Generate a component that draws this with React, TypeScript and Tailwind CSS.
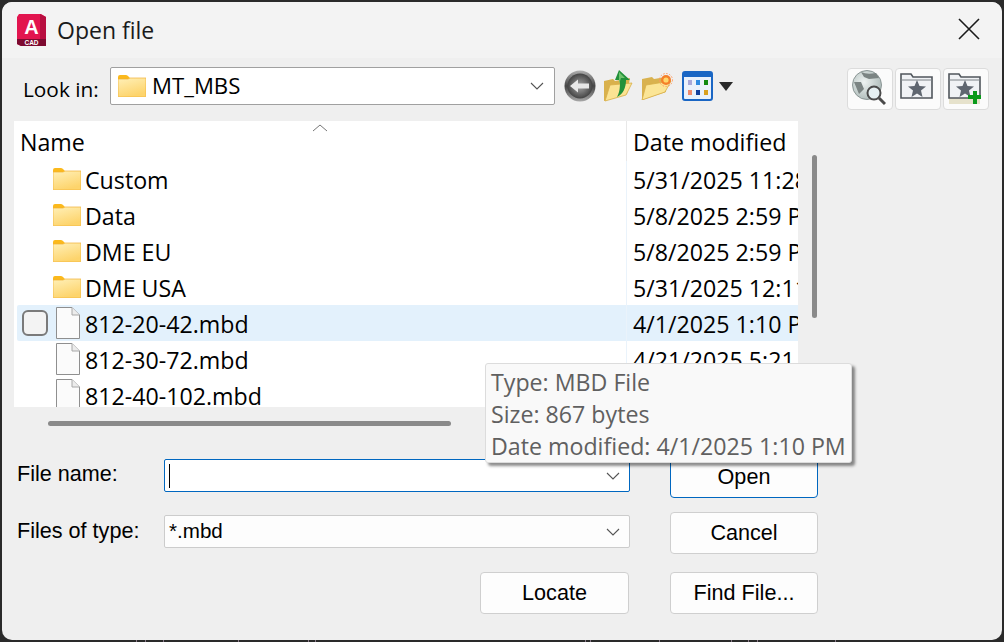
import React from "react";

const uiFont = "font-['Open_Sans','Noto_Sans',sans-serif]";
const formFont = "font-['Liberation_Sans',Arial,sans-serif]";

const FolderIcon: React.FC<{ id: string }> = ({ id }) => (
  <svg width="28" height="22" viewBox="0 0 28 22" className="shrink-0">
    <defs>
      <linearGradient id={id} x1="0" y1="0" x2="0.4" y2="1">
        <stop offset="0" stopColor="#fff0b8" />
        <stop offset="1" stopColor="#fdd46c" />
      </linearGradient>
    </defs>
    <path d="M0 2 Q0 0 2 0 H8 Q9.5 0 10.5 1.5 L12 3 H28 V6 H0 Z" fill="#fbb91c" />
    <path d="M0 4 H10 L12 3 H28 V21 Q28 22 27 22 H1 Q0 22 0 21 Z" fill={`url(#${id})`} stroke="#f0b030" strokeWidth="0.7" />
  </svg>
);

const DocIcon = () => (
  <svg width="24" height="32" viewBox="0 0 24 32" className="shrink-0">
    <path d="M0.5 0.5 H16 L23.5 8 V31.5 H0.5 Z" fill="#fbfbfb" stroke="#8f8f8f" />
    <path d="M16 0.5 V8 H23.5" fill="#ececec" stroke="#a8a8a8" />
  </svg>
);

const Chevron = () => (
  <svg width="14" height="8" viewBox="0 0 14 8" className="shrink-0">
    <path d="M1 1 L7 7 L13 1" fill="none" stroke="#555" strokeWidth="1.1" />
  </svg>
);

const CadLogo = () => (
  <svg width="31" height="33" viewBox="0 0 31 33" className="shrink-0">
    <path d="M3 0 H25 L30 3 V32 H5 L1 30 V3 Z" fill="#e2154f" />
    <path d="M24 0 L30 3 V26 H24 Z" fill="#b80e40" />
    <path d="M1 25 H30 V32 H5 L1 30 Z" fill="#7d0a30" />
    <text x="15.5" y="20" textAnchor="middle" fontSize="20" fontWeight="700" fill="#fff" fontFamily="Liberation Sans">A</text>
    <text x="15.5" y="31" textAnchor="middle" fontSize="6.5" fontWeight="700" fill="#fff" fontFamily="Liberation Sans">CAD</text>
  </svg>
);

const BackIcon = () => (
  <svg width="32" height="32" viewBox="0 0 32 32">
    <defs>
      <radialGradient id="backFill" cx="0.5" cy="0.5" r="0.55">
        <stop offset="0" stopColor="#a8a8a8" />
        <stop offset="0.6" stopColor="#666" />
        <stop offset="1" stopColor="#3a3a3a" />
      </radialGradient>
      <linearGradient id="backRim" x1="0" y1="0" x2="0" y2="1">
        <stop offset="0" stopColor="#b0b0b0" />
        <stop offset="0.5" stopColor="#454545" />
        <stop offset="1" stopColor="#a8a8a8" />
      </linearGradient>
      <filter id="soft">
        <feGaussianBlur stdDeviation="0.6" />
      </filter>
    </defs>
    <circle cx="16" cy="16" r="15.5" fill="url(#backRim)" />
    <circle cx="16" cy="16" r="12.5" fill="url(#backFill)" filter="url(#soft)" />
    <path d="M6 16 L14 9.5 V13.5 H25 V18.5 H14 V22.5 Z" fill="#e8e8e8" filter="url(#soft)" />
  </svg>
);

const UpIcon = () => (
  <svg width="30" height="32" viewBox="0 0 30 32">
    <path d="M1 11 L10 9 L12 11 L27 8 L24 24 L1 31 Z" fill="#d9b14c" />
    <path d="M2 31 L7 15 L29 13 L23 25 Z" fill="#fbe393" stroke="#d8ae48" strokeWidth="0.8" />
    <path d="M16 0 L27 10 H23 C23 18 20 24 14 27 C17 22 17 16 17 10 H12 Z" fill="#22913a" />
    <path d="M16 2 L22 8 H18 L16 14 Z" fill="#6fc46d" />
  </svg>
);

const NewFolderIcon = () => (
  <svg width="32" height="28" viewBox="0 0 32 28">
    <path d="M1 7 L11 5 L13 7 L25 5 V20 L1 28 Z" fill="#d9b24f" />
    <path d="M1 28 L5 13 L30 9 L24 20 Z" fill="#fbe596" stroke="#d8ae48" strokeWidth="0.8" />
    <circle cx="25" cy="8" r="5" fill="#f5802a" />
    <circle cx="25" cy="8" r="2.6" fill="#ffd76a" />
    <circle cx="25" cy="8" r="6.5" fill="none" stroke="#ff9a60" strokeWidth="1" strokeDasharray="1.5 1.5" />
  </svg>
);

const ViewsIcon = () => {
  const dots = [
    ["#a8a8d8", 6, 9],
    ["#2f8ae0", 14, 9],
    ["#128a12", 22, 9],
    ["#f08a6a", 6, 19],
    ["#123f9c", 14, 19],
    ["#d8a020", 22, 19],
  ] as const;
  return (
    <svg width="31" height="30" viewBox="0 0 31 30">
      <rect x="1" y="1" width="29" height="28" rx="2" fill="#eaf1fb" stroke="#1a66c4" strokeWidth="2" />
      <rect x="1" y="1" width="29" height="5" fill="#1a66c4" />
      {dots.map(([c, x, y]) => (
        <rect key={`${x}-${y}`} x={x} y={y} width="4" height="5" fill={c} />
      ))}
    </svg>
  );
};

const SearchWebIcon = () => (
  <svg width="34" height="36" viewBox="0 0 34 36">
    <defs>
      <radialGradient id="globe" cx="0.4" cy="0.4" r="0.7">
        <stop offset="0" stopColor="#eef3f2" />
        <stop offset="1" stopColor="#a8b6b4" />
      </radialGradient>
    </defs>
    <circle cx="15" cy="15" r="14.5" fill="url(#globe)" stroke="#8b9695" />
    <path d="M9 2 Q15 5 24 3 L27 8 L17 9 L12 7 Z M2 12 L9 12 L12 19 L7 24 Z" fill="#7b8483" />
    <circle cx="22" cy="23" r="6.5" fill="#e6f0f2" stroke="#4a4a4a" strokeWidth="2" />
    <path d="M27 28 L33 34" stroke="#4a4a4a" strokeWidth="3" />
  </svg>
);

const FavFolderIcon: React.FC<{ plus?: boolean }> = ({ plus }) => (
  <svg width="33" height="32" viewBox="0 0 33 32">
    {plus && <rect x="1" y="25" width="31" height="7" fill="#e6e2cc" />}
    <path d="M1 2 H11 L13 5 H32 V26 H1 Z" fill="#f0f2f5" stroke="#50565c" strokeWidth="1.6" />
    <path d="M1 8 H32" stroke="#7c8288" strokeWidth="1.2" />
    <path d="M17 8 L19.5 14 L26 14.5 L21 18.5 L22.5 25 L17 21.5 L11.5 25 L13 18.5 L8 14.5 L14.5 14 Z" fill="#5f6670" />
    {plus && <path d="M25 19 H29 V23 H33 V27 H29 V32 H25 V27 H20 V23 H25 Z" fill="#0a9a1a" />}
  </svg>
);

const ToolButton: React.FC<{ children: React.ReactNode }> = ({ children }) => (
  <div className="flex h-[42px] w-[46px] items-center justify-center rounded-[4px] border border-[#dcdcdc] bg-[#fbfbfb] pb-[2px] pr-[3px]">
    {children}
  </div>
);

const DialogButton: React.FC<{ label: string; primary?: boolean; className?: string }> = ({ label, primary, className }) => (
  <button
    className={`flex h-[42px] items-center justify-center rounded-[4px] border bg-[#fdfdfd] text-[21.6px] text-black ${formFont} ${
      primary ? "border-[#0067c0]" : "border-[#cfcfcf]"
    } ${className ?? ""}`}
  >
    {label}
  </button>
);

const rows = [
  { name: "Custom", date: "5/31/2025 11:28 AM", folder: true },
  { name: "Data", date: "5/8/2025 2:59 PM", folder: true },
  { name: "DME EU", date: "5/8/2025 2:59 PM", folder: true },
  { name: "DME USA", date: "5/31/2025 12:11 PM", folder: true },
  { name: "812-20-42.mbd", date: "4/1/2025 1:10 PM", hover: true },
  { name: "812-30-72.mbd", date: "4/21/2025 5:21 PM" },
  { name: "812-40-102.mbd", date: "4/21/2025 5:21 PM" },
];

const ticks = [136, 145, 163, 238, 308, 315, 585, 590, 659, 731, 748, 757, 835];

export default function App() {
  return (
    <div className="relative h-[642px] w-[1004px] overflow-hidden bg-[#2a2a2a] p-[2px] pb-0">
      <div className={`relative flex h-[638px] flex-col overflow-hidden rounded-[10px] bg-[#efefef] ${uiFont}`}>
        {/* title bar */}
        <div className="flex h-[56px] shrink-0 items-center bg-[#f3f3f3] pl-[14px] pr-[22px]">
          <CadLogo />
          <span className="ml-[10px] text-[23px] text-[#1a1a1a]">Open file</span>
          <svg width="22" height="22" viewBox="0 0 22 22" className="ml-auto -mt-[2px]">
            <path d="M1 1 L21 21 M21 1 L1 21" stroke="#1a1a1a" strokeWidth="1.6" />
          </svg>
        </div>

        {/* look in toolbar */}
        <div className="flex h-[63px] shrink-0 items-start pl-[21px] pr-[13px] pt-[9px]">
          <span className="mt-[7px] w-[87px] text-[20.8px] text-black">Look in:</span>
          <div className="flex h-[38px] w-[445px] items-center rounded-[2px] border border-[#a0a0a0] bg-white pl-[7px] pr-[10px]">
            <FolderIcon id="lookFolder" />
            <span className={`ml-[6px] text-[22.2px] text-black ${uiFont}`}>MT_MBS</span>
            <span className="ml-auto">
              <Chevron />
            </span>
          </div>
          <div className="ml-[9px] mt-[3px] flex items-center">
            <BackIcon />
            <span className="ml-[7px]">
              <UpIcon />
            </span>
            <span className="ml-[8px]">
              <NewFolderIcon />
            </span>
            <span className="ml-[9px]">
              <ViewsIcon />
            </span>
            <span className="ml-[6px] h-0 w-0 border-x-[7px] border-t-[9px] border-x-transparent border-t-[#2a2a2a]" />
          </div>
          <div className="ml-auto flex gap-[2px] pt-[1px]">
            <ToolButton>
              <SearchWebIcon />
            </ToolButton>
            <ToolButton>
              <FavFolderIcon />
            </ToolButton>
            <ToolButton>
              <FavFolderIcon plus />
            </ToolButton>
          </div>
        </div>

        {/* file list */}
        <div className="ml-[12px] flex shrink-0">
          <div className="relative h-[286px] w-[784px] overflow-hidden bg-white text-[23.2px] leading-none text-black">
            <div className="relative flex h-[40px]">
              <div className="flex w-[613px] shrink-0 items-center border-r border-[#e8e8e8] pl-[6px] pt-[4px]">Name</div>
              <div className="flex items-center whitespace-nowrap pl-[6px] pt-[4px]">Date modified</div>
              <svg width="16" height="8" viewBox="0 0 16 8" className="absolute left-[298px] top-[3px]">
                <path d="M1 7 L8 1 L15 7" fill="none" stroke="#777" strokeWidth="1" />
              </svg>
            </div>
            {rows.map((r) => (
              <div
                key={r.name}
                className={`ml-[3px] flex h-[36px] items-center overflow-hidden ${r.hover ? "rounded-l-[2px] bg-[#e3f1fc]" : ""}`}
              >
                <div className="relative flex w-[610px] shrink-0 items-center self-stretch border-r border-[#eaf3fb]">
                  {r.hover && (
                    <span className="absolute left-[5px] top-[5px] h-[26px] w-[26px] rounded-[6px] border-2 border-[#7a7a7a] bg-[#f3f3f3]" />
                  )}
                  <span className={`flex w-[68px] shrink-0 justify-end ${r.folder ? "pr-[4px]" : "pr-[5px]"}`}>
                    {r.folder ? <FolderIcon id={`row${r.name.replace(" ", "")}`} /> : <DocIcon />}
                  </span>
                  <span className="whitespace-nowrap pt-[4px]">{r.name}</span>
                </div>
                <span className="whitespace-nowrap pl-[6px] pt-[4px]">{r.date}</span>
              </div>
            ))}
          </div>
          <div className="ml-[14px] mt-[34px] h-[163px] w-[5px] rounded-full bg-[#8a8a8a]" />
        </div>

        {/* horizontal scrollbar */}
        <div className="ml-[46px] mt-[14px] h-[5px] w-[403px] shrink-0 rounded-full bg-[#8a8a8a]" />

        {/* file name / type form */}
        <div className={`ml-[15px] mt-[33px] flex text-[21.6px] text-black ${formFont}`}>
          <div className="w-[613px]">
            <div className="flex h-[33px] items-center">
              <span className="w-[147px] -translate-y-px">File name:</span>
              <div className="flex h-[33px] w-[466px] items-center rounded-[2px] border border-[#0067c0] bg-white pl-[4px] pr-[9px]">
                <span className="h-[24px] w-px bg-black" />
                <span className="ml-auto">
                  <Chevron />
                </span>
              </div>
            </div>
            <div className="mt-[23px] flex h-[33px] items-center">
              <span className="w-[147px]">Files of type:</span>
              <div className="flex h-[33px] w-[466px] items-center rounded-[2px] border border-[#cccccc] bg-[#fdfdfd] pl-[4px] pr-[9px] text-[20.6px]">
                <span>*.mbd</span>
                <span className="ml-auto">
                  <Chevron />
                </span>
              </div>
            </div>
            <div className="mt-[24px] mr-[1px] flex justify-end">
              <DialogButton label="Locate" className="w-[149px]" />
            </div>
          </div>
          <div className="ml-[40px] -mt-[3px] flex w-[148px] flex-col">
            <DialogButton label="Open" primary />
            <DialogButton label="Cancel" className="mt-[14px]" />
            <DialogButton label="Find File..." className="mt-[18px]" />
          </div>
        </div>

        {/* hover tooltip */}
        <div className="absolute left-[483px] top-[361px] h-[100px] w-[367px] rounded-[3px] border border-[#dcdcdc] bg-[#f9f9f9] pl-[5px] pt-[2px] text-[23.2px] leading-[32px] text-[#606060] shadow-[3px_3px_3px_rgba(0,0,0,0.45)]">
          <div>Type: MBD File</div>
          <div>Size: 867 bytes</div>
          <div className="whitespace-nowrap">Date modified: 4/1/2025 1:10 PM</div>
        </div>
      </div>

      {/* bits of the drawing behind the dialog */}
      {ticks.map((x) => (
        <span key={x} className="absolute bottom-0 h-[2px] w-px bg-[#8a7a8a]" style={{ left: x }} />
      ))}
    </div>
  );
}
